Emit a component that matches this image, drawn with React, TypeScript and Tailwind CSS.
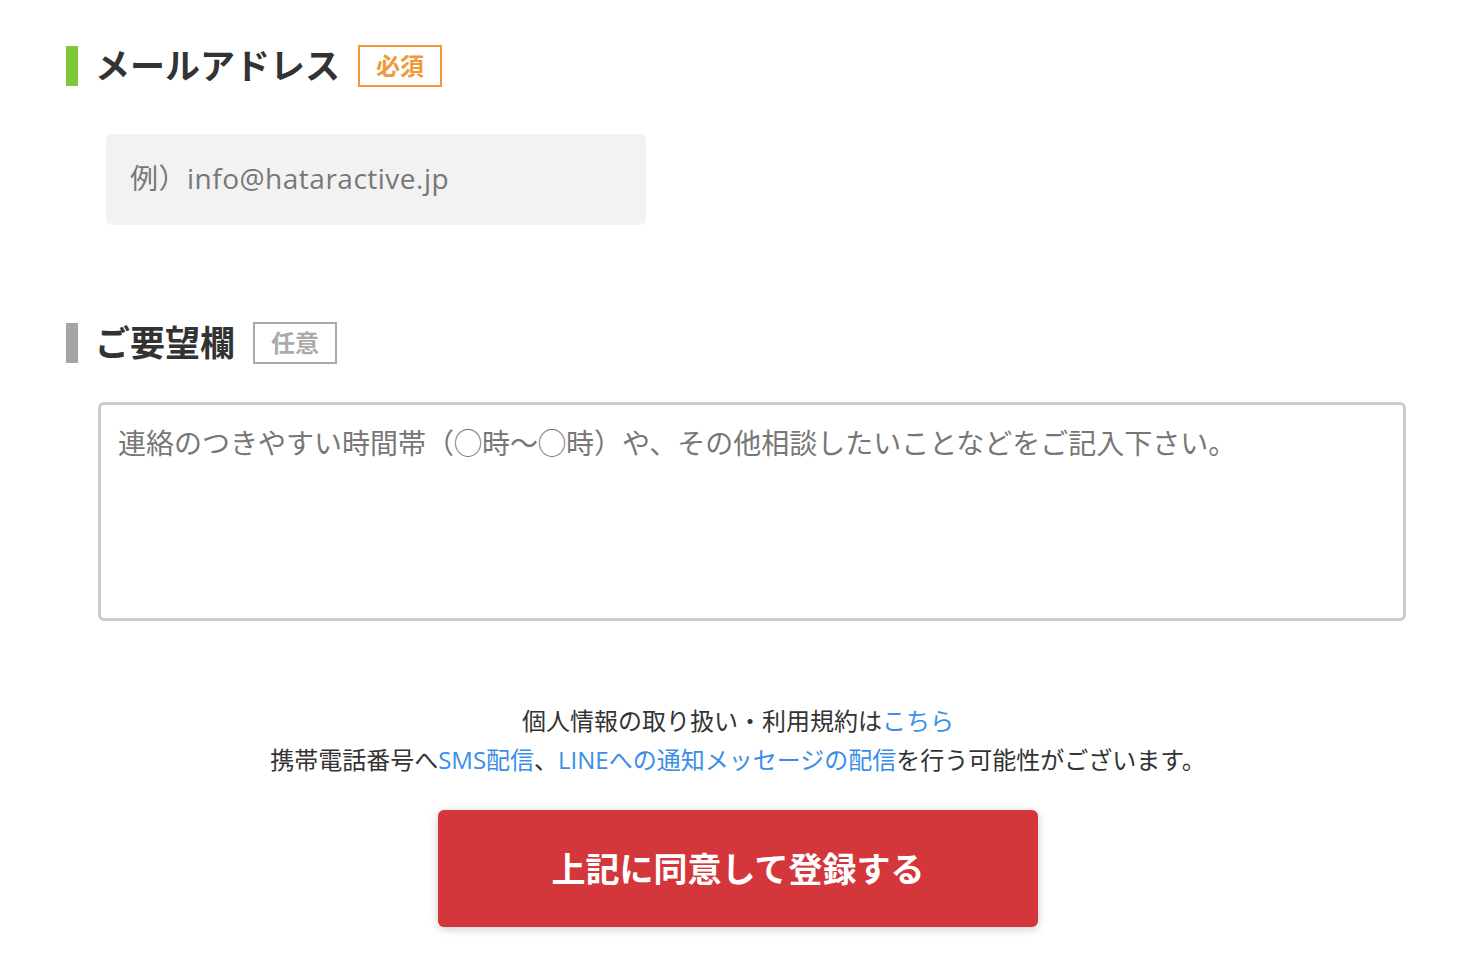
import React from "react";

const font = { fontFamily: '"Open Sans", "Noto Sans CJK JP", sans-serif' };
const cjk = { fontFamily: '"Noto Sans CJK JP", sans-serif' };

function Heading({ label, badge, required }: { label: string; badge: string; required: boolean }) {
    return (
        <div className="flex items-center h-[42px]" style={cjk}>
            <span className={`w-[12px] h-[40px] ${required ? "bg-[#7ec93a]" : "bg-[#a5a5a5]"}`} />
            <h2 className="ml-[17px] pb-[5px] text-[35px] leading-none font-bold text-[#333]">{label}</h2>
            <span
                className={`ml-[18px] h-[42px] w-[84px] pb-[3px] flex items-center justify-center border-2 text-[24px] font-bold ${
                    required ? "border-[#f0993a] text-[#f0993a]" : "border-[#aaa] text-[#aaa]"
                }`}
            >
                {badge}
            </span>
        </div>
    );
}

export default function App() {
    return (
        <div className="w-[1472px] h-[980px] bg-white" style={font}>
            <div className="pl-[66px] pt-[45px]">
                <Heading label="メールアドレス" badge="必須" required />
                <input
                    type="email"
                    placeholder="例）info@hataractive.jp"
                    className="mt-[47px] ml-[40px] block w-[540px] h-[91px] rounded-[6px] bg-[#f2f2f2] px-[24px] pb-[3px] text-[28px] tracking-[0.5px] text-[#333] placeholder:text-[#777] outline-none"
                />

                <div className="mt-[97px]">
                    <Heading label="ご要望欄" badge="任意" required={false} />
                </div>
                <textarea
                    placeholder="連絡のつきやすい時間帯（◯時〜◯時）や、その他相談したいことなどをご記入下さい。"
                    className="mt-[38px] ml-[32px] block w-[1308px] h-[219px] resize-none rounded-[6px] border-[3px] border-[#ccc] px-[17px] pt-[17px] text-[28px] leading-[40px] text-[#333] placeholder:text-[#777] outline-none"
                    style={cjk}
                />
            </div>

            <div className="mt-[80px] pl-[4px] flex flex-col items-center text-[24px] text-[#333] leading-[39px]">
                <p>
                    個人情報の取り扱い・利用規約は<a className="text-[#3b8ee8]">こちら</a>
                </p>
                <p>
                    携帯電話番号へ<a className="text-[#3b8ee8]">SMS配信</a>、
                    <a className="text-[#3b8ee8]">LINEへの通知メッセージの配信</a>を行う可能性がございます。
                </p>
                <button
                    className="mt-[31px] w-[600px] h-[117px] rounded-[6px] bg-[#d3373c] pb-[2px] text-white text-[34px] font-bold shadow-[0_2px_10px_rgba(0,0,0,0.2)]"
                    style={cjk}
                >
                    上記に同意して登録する
                </button>
            </div>
        </div>
    );
}
